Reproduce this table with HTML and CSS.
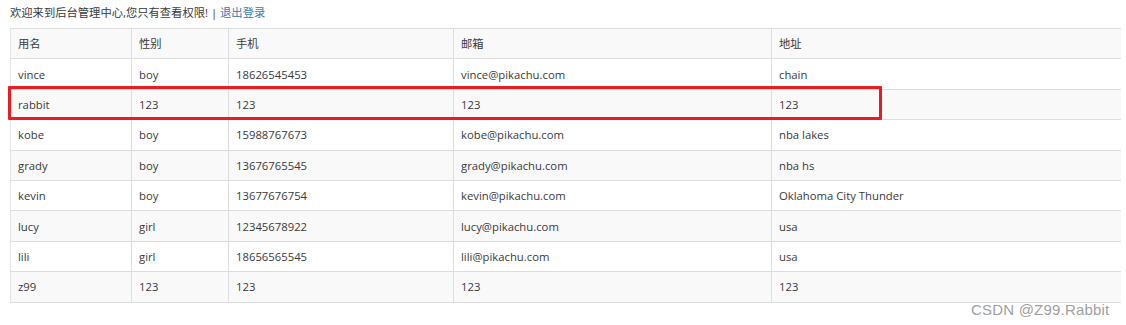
FILE: index.html
```html
<!DOCTYPE html>
<html>
<head>
<meta charset="utf-8">
<link rel="stylesheet" href="styles.css">
</head>
<body>
<div class="page">
  <p class="welcome">欢迎来到后台管理中心,您只有查看权限! | <a class="logout" href="#">退出登录</a></p>
  <div class="table-wrap">
    <table class="users">
      <tbody>
        <tr><td>用名</td><td>性别</td><td>手机</td><td>邮箱</td><td>地址</td></tr>
        <tr><td>vince</td><td>boy</td><td>18626545453</td><td>vince@pikachu.com</td><td>chain</td></tr>
        <tr><td>rabbit</td><td>123</td><td>123</td><td>123</td><td>123</td></tr>
        <tr><td>kobe</td><td>boy</td><td>15988767673</td><td>kobe@pikachu.com</td><td>nba lakes</td></tr>
        <tr><td>grady</td><td>boy</td><td>13676765545</td><td>grady@pikachu.com</td><td>nba hs</td></tr>
        <tr><td>kevin</td><td>boy</td><td>13677676754</td><td>kevin@pikachu.com</td><td>Oklahoma City Thunder</td></tr>
        <tr><td>lucy</td><td>girl</td><td>12345678922</td><td>lucy@pikachu.com</td><td>usa</td></tr>
        <tr><td>lili</td><td>girl</td><td>18656565545</td><td>lili@pikachu.com</td><td>usa</td></tr>
        <tr><td>z99</td><td>123</td><td>123</td><td>123</td><td>123</td></tr>
      </tbody>
    </table>
    <div class="highlight"></div>
  </div>
  <div class="watermark">CSDN @Z99.Rabbit</div>
</div>
</body>
</html>
```

FILE: styles.css
```css
html, body {
  margin: 0;
  padding: 0;
  background: #fff;
}
.page {
  position: relative;
  width: 1126px;
  height: 325px;
  font-family: "Open Sans", "Noto Sans CJK SC", sans-serif;
  font-size: 11.3px;
  color: #393939;
}
.welcome {
  margin: 0;
  padding: 4px 0 0 10px;
  height: 24px;
  line-height: 17px;
  font-size: 11.3px;
  color: #393939;
}
.logout {
  color: #337ab7;
  text-decoration: none;
}
.table-wrap {
  position: relative;
  margin-left: 10px;
  width: 1111px;
}
.users {
  width: 1111px;
  border-collapse: collapse;
  table-layout: fixed;
}
.users td {
  border: 1px solid #ddd;
  padding: 1px 7px 0;
  height: 28.4px;
  line-height: 16px;
  color: #393939;
  white-space: nowrap;
}
.users tr:nth-child(odd) td {
  background: #f9f9f9;
}
.users td:nth-child(1) { width: 106px; }
.users td:nth-child(2) { width: 82px; }
.users td:nth-child(3) { width: 210px; }
.users td:nth-child(4) { width: 303px; }
.users td:nth-child(5) { width: auto; }
.users td:last-child { border-right: none; }
.users td:first-child { border-left: 1px solid #e4e4e4; }
.highlight {
  position: absolute;
  left: -2px;
  top: 58px;
  width: 868px;
  height: 28px;
  border: 3px solid #e81c24;
  border-radius: 1px;
}
.watermark {
  position: absolute;
  left: 971px;
  top: 301px;
  font-family: "Liberation Sans", Arial, sans-serif;
  font-size: 15px;
  color: #a0a0a0;
  letter-spacing: 0.2px;
}
```
